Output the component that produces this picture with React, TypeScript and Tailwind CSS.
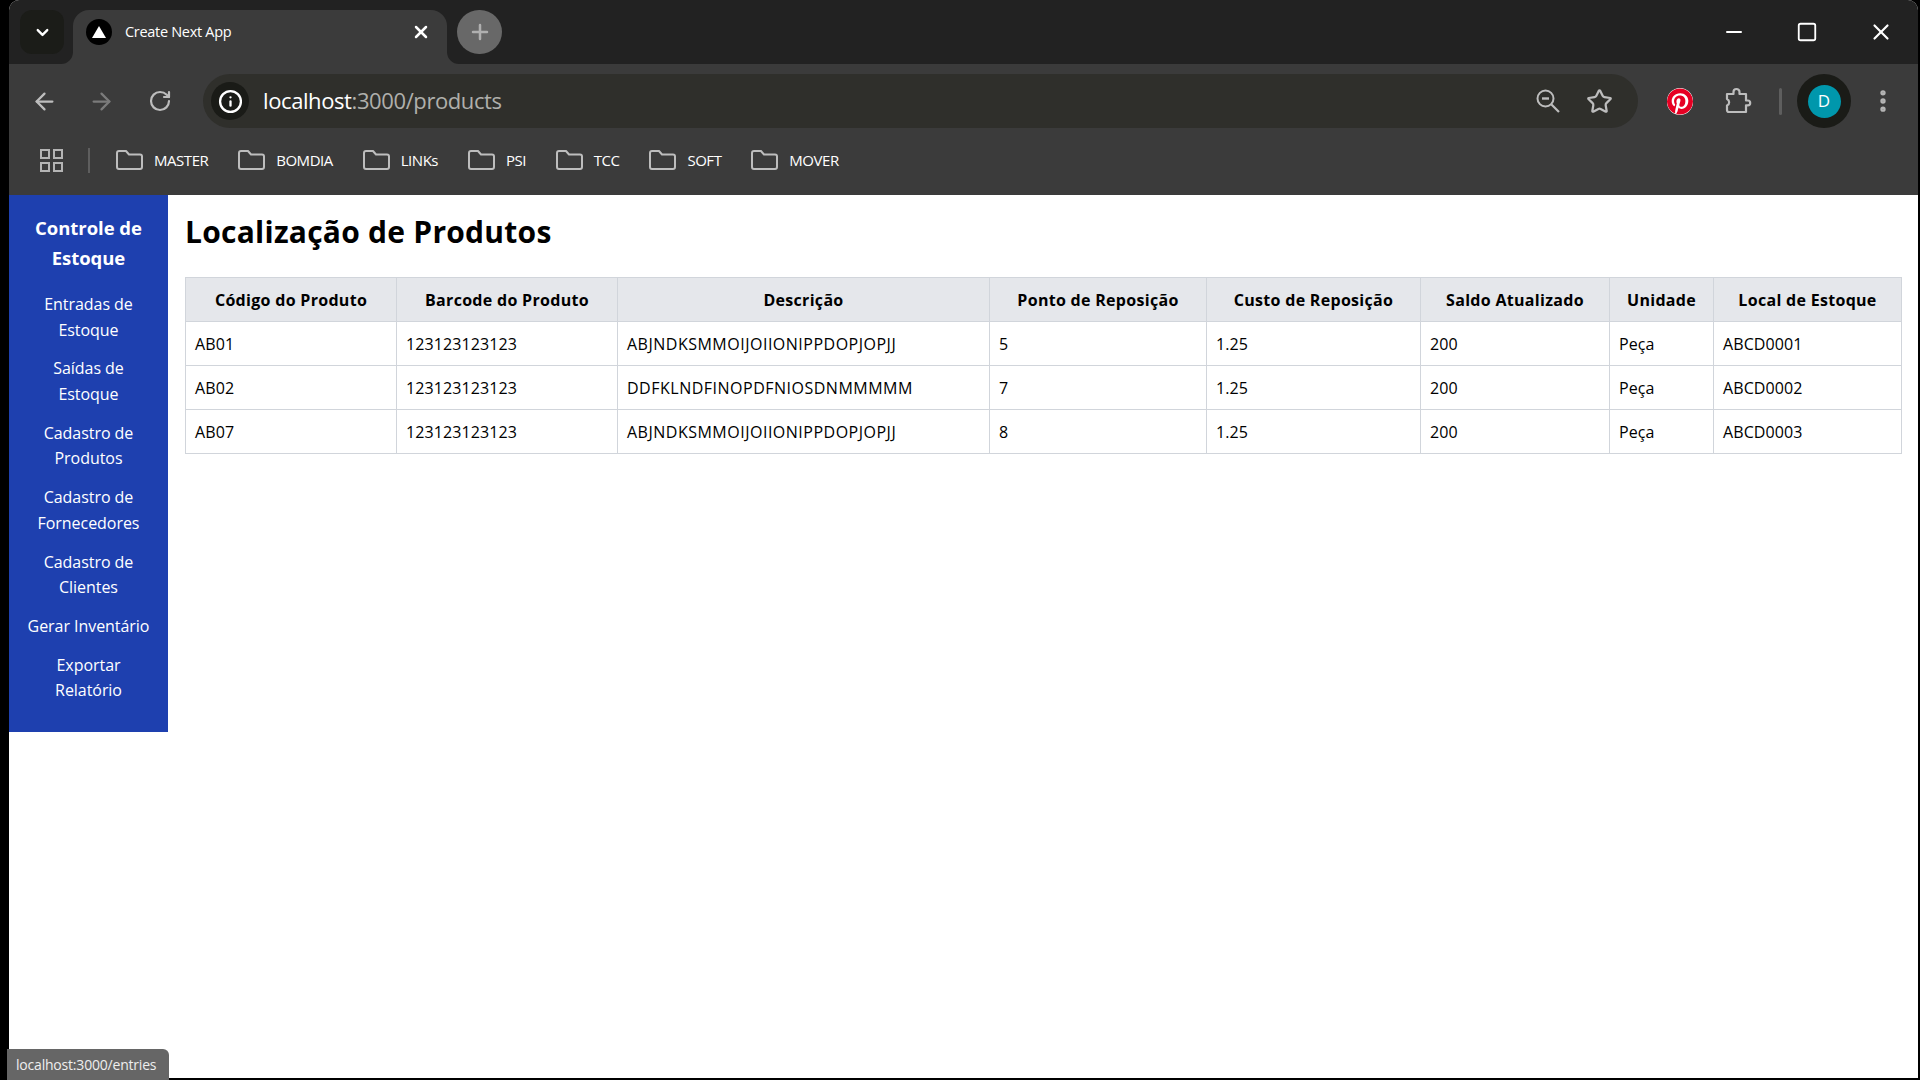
import { ArrowLeft, ArrowRight, ChevronDown, EllipsisVertical, Info, Minus, Plus, RotateCw, Square, Star, X } from "lucide-react";
import { FaPinterest } from "react-icons/fa";

const bookmarks = ["MASTER", "BOMDIA", "LINKs", "PSI", "TCC", "SOFT", "MOVER"];

const navLinks = [
  "Entradas de Estoque",
  "Saídas de Estoque",
  "Cadastro de Produtos",
  "Cadastro de Fornecedores",
  "Cadastro de Clientes",
  "Gerar Inventário",
  "Exportar Relatório",
];

const columns = [
  { label: "Código do Produto", width: "w-[211px]" },
  { label: "Barcode do Produto", width: "w-[221px]" },
  { label: "Descrição", width: "w-[372px]" },
  { label: "Ponto de Reposição", width: "w-[217px]" },
  { label: "Custo de Reposição", width: "w-[214px]" },
  { label: "Saldo Atualizado", width: "w-[189px]" },
  { label: "Unidade", width: "w-[104px]" },
  { label: "Local de Estoque", width: "w-[188px]" },
];

const products = [
  ["AB01", "123123123123", "ABJNDKSMMOIJOIIONIPPDOPJOPJJ", "5", "1.25", "200", "Peça", "ABCD0001"],
  ["AB02", "123123123123", "DDFKLNDFINOPDFNIOSDNMMMMM", "7", "1.25", "200", "Peça", "ABCD0002"],
  ["AB07", "123123123123", "ABJNDKSMMOIJOIIONIPPDOPJOPJJ", "8", "1.25", "200", "Peça", "ABCD0003"],
];

const FolderIcon = () => (
  <svg width="27" height="20" viewBox="0 0 27 20" fill="none" stroke="#bdbdbd" strokeWidth="2" strokeLinejoin="round" className="shrink-0">
    <path d="M1 3a2 2 0 0 1 2-2h7l3 3.5h11a2 2 0 0 1 2 2V17a2 2 0 0 1-2 2H3a2 2 0 0 1-2-2z" />
  </svg>
);

const AppsIcon = () => (
  <svg width="23" height="23" viewBox="0 0 23 23" fill="none" stroke="#b4b4b4" strokeWidth="2" className="shrink-0">
    <rect x="1" y="1" width="8" height="8" />
    <rect x="14" y="1" width="8" height="8" />
    <rect x="1" y="14" width="8" height="8" />
    <rect x="14" y="14" width="8" height="8" />
  </svg>
);

const PuzzleIcon = () => (
  <svg width="28" height="28" viewBox="0 0 28 28" fill="none" stroke="#bdbdbd" strokeWidth="2.2" strokeLinejoin="round">
    <path d="M3 7h6.5V5a3 3 0 0 1 6 0v2H22v6.5h1.8a2.4 2.4 0 0 1 0 4.8H22V25H5a2 2 0 0 1-2-2v-4.5a3.6 3.6 0 0 0 0-6.6z" />
  </svg>
);

const ZoomOutIcon = () => (
  <svg width="24" height="24" viewBox="0 0 24 24" fill="none" stroke="#bdbdbd" strokeWidth="2" className="ml-auto">
    <circle cx="9.5" cy="9.5" r="8" />
    <path d="M15.5 15.5L23 23" strokeWidth="2.2" />
    <path d="M6 9.5h7" strokeWidth="2.4" />
  </svg>
);

const TabFlare = ({ side }: { side: "left" | "right" }) => (
  <svg
    width="12"
    height="12"
    viewBox="0 0 12 12"
    className={side === "left" ? "absolute bottom-0 -left-3" : "absolute bottom-0 -right-3"}
  >
    <path d={side === "left" ? "M12 0v12H0a12 12 0 0 0 12-12z" : "M0 0v12h12A12 12 0 0 1 0 0z"} fill="#3b3b3b" />
  </svg>
);

const BrowserChrome = () => (
  <header className="shrink-0 font-['Open_Sans',sans-serif]">
    {/* Tab strip */}
    <div className="flex h-16 items-end bg-[#222222] pl-[11px]">
      <button className="mb-[10px] flex h-11 w-11 items-center justify-center rounded-xl bg-[#1b1c18]">
        <ChevronDown size={19} strokeWidth={3} color="#ffffff" />
      </button>
      <div className="relative ml-[9px] flex h-[54px] w-[374px] items-center rounded-t-2xl bg-[#3b3b3b] pb-[10px] pl-[13px]">
        <TabFlare side="left" />
        <TabFlare side="right" />
        <span className="flex h-[26px] w-[26px] items-center justify-center rounded-full bg-black">
          <span className="h-0 w-0 border-x-[7px] border-b-[12px] border-x-transparent border-b-white" />
        </span>
        <span className="ml-[13px] text-[14.5px] tracking-[-0.3px] text-white">Create Next App</span>
        <X size={20} strokeWidth={3} color="#ffffff" className="ml-auto mr-4" />
      </div>
      <button className="mb-[10px] ml-[10px] flex h-11 w-[45px] items-center justify-center rounded-full bg-[#686868]">
        <Plus size={24} strokeWidth={2.5} color="#b0b0b0" />
      </button>
      <div className="mb-[10px] ml-auto flex h-11 items-center gap-[50px] pr-6">
        <Minus size={24} strokeWidth={2} color="#ffffff" />
        <Square size={22} strokeWidth={2} color="#ffffff" />
        <X size={26} strokeWidth={2} color="#ffffff" />
      </div>
    </div>

    {/* Address bar */}
    <div className="flex h-16 items-center bg-[#3b3b3b] pt-[10px] pl-[22px]">
      <ArrowLeft size={27} strokeWidth={2} color="#bdbdbd" />
      <ArrowRight size={27} strokeWidth={2} color="#7b7b7b" className="ml-[30px]" />
      <RotateCw size={24} strokeWidth={2.2} color="#bdbdbd" className="ml-[33px]" />
      <div className="ml-[31px] flex h-[54px] w-[1435px] items-center rounded-full bg-[#2f2f2b] pl-2 pr-[25px]">
        <span className="flex h-[38px] w-[38px] items-center justify-center rounded-full bg-[#1a1b17]">
          <Info size={25} strokeWidth={2.2} color="#ffffff" />
        </span>
        <span className="mb-[2px] ml-[14px] text-[22px] tracking-[-0.4px] text-[#b0b0ac]">
          <span className="text-white">localhost</span>:3000/products
        </span>
        <ZoomOutIcon />
        <Star size={27} strokeWidth={2} color="#bdbdbd" className="ml-[26px]" />
      </div>
      <span className="ml-[28.5px] flex h-[26px] w-[26px] items-center justify-center">
        <FaPinterest size={27} color="#e60023" className="rounded-full bg-white" />
      </span>
      <span className="ml-[31.5px]">
        <PuzzleIcon />
      </span>
      <span className="ml-[27px] h-[27px] w-[3px] rounded bg-[#5e5e5e]" />
      <span className="ml-[15px] flex h-[54px] w-[54px] items-center justify-center rounded-full bg-[#1a1b17]">
        <span className="flex h-[33px] w-[33px] items-center justify-center rounded-full bg-[#0097ac] text-[17px] text-white">D</span>
      </span>
      <EllipsisVertical size={28} strokeWidth={2.6} color="#b4b4b4" className="ml-[18px]" />
    </div>

    {/* Bookmarks */}
    <div className="flex h-[67px] items-center bg-[#3b3b3b] pb-[3px] pl-[31px] text-[15px] tracking-[-0.45px] text-white">
      <AppsIcon />
      <span className="ml-[25px] mr-[26px] h-[25px] w-[2px] bg-[#5e5e5e]" />
      <div className="flex items-center gap-[29.8px]">
        {bookmarks.map((name) => (
          <div key={name} className="flex items-center gap-[11px]">
            <FolderIcon />
            <span>{name}</span>
          </div>
        ))}
      </div>
    </div>
  </header>
);

const Sidebar = () => (
  <aside className="w-[159px] shrink-0 self-start bg-[#1e40af] px-4 pb-[15px] pt-[18px] text-center text-white">
    <h2 className="mb-[19px] text-[18.5px] font-bold leading-[30px] tracking-[-0.05px]">Controle de Estoque</h2>
    <ul className="text-[16px] leading-[25.6px] tracking-[-0.05px]">
      {navLinks.map((link) => (
        <li key={link} className="mb-[13.2px]">
          {link}
        </li>
      ))}
    </ul>
  </aside>
);

const App = () => {
  return (
    <div className="relative flex h-screen w-full flex-col overflow-hidden bg-black pb-[2px] pl-[9px] pr-[2px]">
      <div className="flex min-h-0 flex-1 flex-col overflow-hidden rounded-t-[10px] bg-white">
        <BrowserChrome />

        <div className="flex min-h-0 flex-1 font-['Open_Sans',sans-serif] text-black">
          <Sidebar />

          <main className="min-w-0 flex-1 pb-4 pl-[17px] pr-[17px] pt-[14px]">
            <h1 className="mb-[22px] text-[30px] font-bold leading-[46px] tracking-[0.25px]">Localização de Produtos</h1>

            <table className="w-full table-fixed border-collapse text-[16px] leading-[26px]">
              <thead>
                <tr className="bg-[#e5e7eb]">
                  {columns.map((col) => (
                    <th key={col.label} className={`${col.width} border border-[#d1d5db] px-2 py-[8.5px] text-center font-bold tracking-[0.3px]`}>
                      {col.label}
                    </th>
                  ))}
                </tr>
              </thead>
              <tbody>
                {products.map((row) => (
                  <tr key={row[0]}>
                    {row.map((cell, i) => (
                      <td
                        key={i}
                        className={
                          i === 2
                            ? "border border-[#d1d5db] py-[8.5px] pl-[9px] pr-2 tracking-[0.5px]"
                            : "border border-[#d1d5db] py-[8.5px] pl-[9px] pr-2 tracking-[0.1px]"
                        }
                      >
                        {cell}
                      </td>
                    ))}
                  </tr>
                ))}
              </tbody>
            </table>
          </main>
        </div>
      </div>

      {/* Hovered link status bubble */}
      <div className="absolute bottom-0 left-[7px] flex h-[31px] w-[162px] items-center rounded-tr-md bg-[#666666] pl-[9px] font-['Open_Sans',sans-serif] text-[14px] tracking-[-0.2px] text-[#eeeeee]">
        localhost:3000/entries
      </div>
    </div>
  );
};

export default App;
